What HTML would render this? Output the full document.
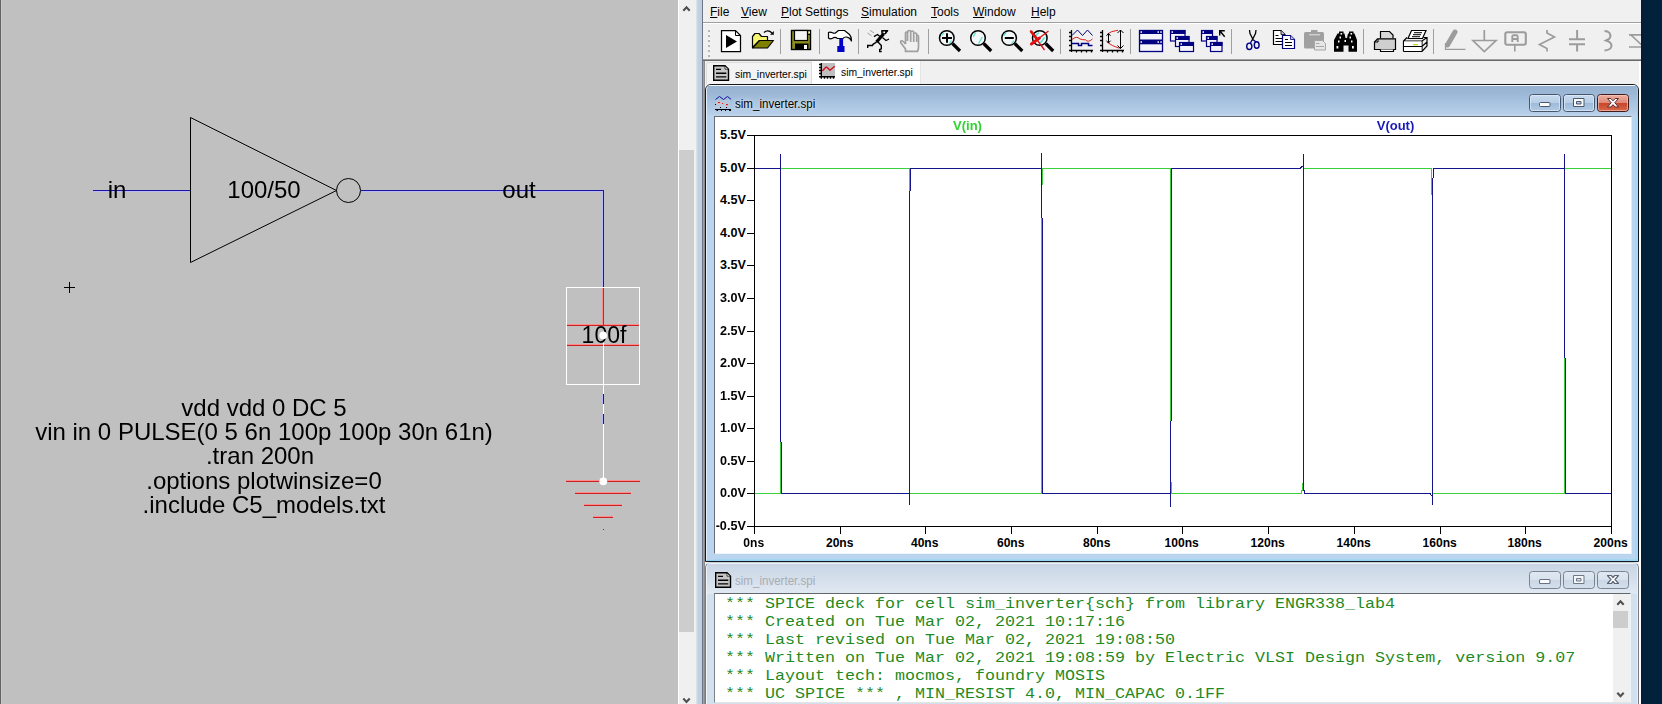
<!DOCTYPE html>
<html>
<head>
<meta charset="utf-8">
<title>sim_inverter</title>
<style>
html,body{margin:0;padding:0;}
body{width:1662px;height:704px;overflow:hidden;position:relative;background:#c0c0c0;font-family:"Liberation Sans",sans-serif;}
.abs{position:absolute;}
#left{left:0;top:0;width:678px;height:704px;background:#c0c0c0;}
#sch{left:0;top:0;}
.st{will-change:transform;position:absolute;font-size:24px;line-height:24px;color:#000;white-space:nowrap;transform:translateX(-50%);}
#vsb{left:678px;top:0;width:18px;height:704px;background:#f0f0f0;border-left:1px solid #fff;box-sizing:border-box;}
#vsbthumb{left:679px;top:150px;width:15px;height:482px;background:#cdcdcd;}
#frameL{left:696px;top:0;width:6px;height:704px;background:linear-gradient(90deg,#dfe7f0 0,#c4d2e0 30%,#c0cedc 100%);}
#frameLd{left:702px;top:0;width:1px;height:704px;background:#6d7787;}
#app{left:703px;top:0;width:938px;height:704px;background:#f0f0f0;}
#navy{left:1641px;top:0;width:21px;height:704px;background:linear-gradient(90deg,#021b2c 0,#02203a 2px,#02223c 100%);}
#menubar{left:703px;top:0;width:938px;height:22px;background:#f0f0f0;}
.mi{position:absolute;top:5px;font-size:12px;line-height:15px;color:#000;white-space:nowrap;}
.mi u{text-decoration:underline;}
#menuline{left:703px;top:22px;width:938px;height:1px;background:#a0a0a0;}
#menuline2{left:703px;top:23px;width:938px;height:1px;background:#ffffff;}
#tbline1{left:703px;top:59px;width:938px;height:1px;background:#a0a0a0;}
#tbline2{left:703px;top:60px;width:938px;height:1px;background:#696969;}

.win{position:absolute;box-sizing:border-box;border:1px solid #15181d;border-radius:6px 6px 0 0;overflow:hidden;}
.win .hl{position:absolute;left:0;top:0;right:0;bottom:0;box-sizing:border-box;border-radius:5px 5px 0 0;}
.ttxt{position:absolute;font-size:12px;line-height:15px;white-space:nowrap;transform-origin:0 0;transform:scaleX(0.963);}
.cbtn{position:absolute;box-sizing:border-box;width:32px;height:18px;border-radius:3px;}
.tabtxt{position:absolute;font-size:11px;line-height:14px;white-space:nowrap;color:#000;transform-origin:0 0;transform:scaleX(0.94);}
.mono{position:absolute;font-family:"Liberation Mono",monospace;font-size:14px;line-height:18px;color:#1f8a1f;white-space:pre;transform-origin:0 0;transform:scaleX(1.1905);}
</style>
</head>
<body>
<div id="left" class="abs"></div>
<svg id="sch" class="abs" width="678" height="704" viewBox="0 0 678 704">
  <rect x="0" y="0" width="1" height="704" fill="#646464"/><rect x="1" y="0" width="1" height="704" fill="#c8c8c8"/>
  <!-- wires -->
  <g stroke="#b8b8ff" stroke-width="1" fill="none" shape-rendering="crispEdges">
    <line x1="93" y1="191.5" x2="190" y2="191.5"/>
    <line x1="361" y1="191.5" x2="603" y2="191.5"/>
    <line x1="602.5" y1="191" x2="602.5" y2="287"/>
  </g>
  <g stroke="#1e1496" stroke-width="1" fill="none" shape-rendering="crispEdges">
    <line x1="93" y1="190.5" x2="190" y2="190.5"/>
    <line x1="361" y1="190.5" x2="604" y2="190.5"/>
    <line x1="603.5" y1="190" x2="603.5" y2="287"/>
  </g>
  <!-- inverter -->
  <g stroke="#000" stroke-width="1" fill="none">
    <polygon points="190.5,117.5 190.5,262.5 336.5,190.5"/>
    <circle cx="348.5" cy="190.5" r="12"/>
  </g>
  <!-- capacitor -->
  <g shape-rendering="crispEdges" fill="none">
    <rect x="566.5" y="287.5" width="73" height="97" stroke="#fff"/>
    <g stroke="#ff8c8c">
    <line x1="602.5" y1="288" x2="602.5" y2="325"/>
    <line x1="567" y1="324.5" x2="639" y2="324.5"/>
    <line x1="567" y1="344.5" x2="639" y2="344.5"/>
    </g>
    <g stroke="#cc2222">
    <line x1="603.5" y1="288" x2="603.5" y2="325"/>
    <line x1="567" y1="325.5" x2="639" y2="325.5"/>
    <line x1="567" y1="345.5" x2="639" y2="345.5"/>
    </g>
    <line x1="603.5" y1="336" x2="603.5" y2="481" stroke="#fff"/>
    <line x1="602.5" y1="394" x2="602.5" y2="404" stroke="#b8b8ff"/><line x1="603.5" y1="394" x2="603.5" y2="404" stroke="#1e1496"/>
    <line x1="602.5" y1="414" x2="602.5" y2="424" stroke="#b8b8ff"/><line x1="603.5" y1="414" x2="603.5" y2="424" stroke="#1e1496"/>
    <!-- ground -->
    <g stroke="#ff8c8c">
      <line x1="566" y1="480.5" x2="640" y2="480.5"/>
      <line x1="575" y1="492.5" x2="631" y2="492.5"/>
      <line x1="584" y1="504.5" x2="622" y2="504.5"/>
      <line x1="593" y1="516.5" x2="613" y2="516.5"/>
    </g>
    <g stroke="#cc2222">
      <line x1="566" y1="481.5" x2="640" y2="481.5"/>
      <line x1="575" y1="493.5" x2="631" y2="493.5"/>
      <line x1="584" y1="505.5" x2="622" y2="505.5"/>
      <line x1="593" y1="517.5" x2="613" y2="517.5"/>
      <line x1="603" y1="529.5" x2="604" y2="529.5" stroke="#803030"/>
    </g>
  </g>
  <circle cx="603.3" cy="481.3" r="3.9" fill="#fff"/>
  <!-- cursor + -->
  <g stroke="#000" shape-rendering="crispEdges">
    <line x1="64" y1="287.5" x2="75" y2="287.5"/>
    <line x1="69.5" y1="282" x2="69.5" y2="293"/>
  </g>
</svg>
<div class="st" style="left:117px;top:178px;">in</div>
<div class="st" style="left:264px;top:178px;">100/50</div>
<div class="st" style="left:519px;top:178px;">out</div>
<div class="st" style="left:604px;top:323px;font-size:23px;">100f</div>
<svg class="abs" style="left:598px;top:330px" width="12" height="12"><circle cx="5.2" cy="5.4" r="3.8" fill="#fff"/></svg>
<div class="st" style="left:264px;top:396px;">vdd vdd 0 DC 5</div>
<div class="st" style="left:264px;top:420px;">vin in 0 PULSE(0 5 6n 100p 100p 30n 61n)</div>
<div class="st" style="left:260px;top:444px;">.tran 200n</div>
<div class="st" style="left:264px;top:469px;">.options plotwinsize=0</div>
<div class="st" style="left:264px;top:493px;">.include C5_models.txt</div>

<div id="vsb" class="abs"></div>
<div id="vsbthumb" class="abs"></div>
<svg class="abs" style="left:679px;top:0" width="17" height="704">
  <path d="M4.3 10.8 L7.5 7.3 L10.7 10.8" stroke="#505050" stroke-width="2.1" fill="none"/>
  <path d="M4.3 698.5 L7.5 702 L10.7 698.5" stroke="#505050" stroke-width="2.1" fill="none"/>
</svg>
<div id="frameL" class="abs"></div>
<div id="frameLd" class="abs"></div>
<div id="app" class="abs"></div>
<div id="navy" class="abs"></div>

<!-- MENU -->
<div id="menubar" class="abs"></div>
<div class="mi" style="left:710px"><u>F</u>ile</div>
<div class="mi" style="left:741px"><u>V</u>iew</div>
<div class="mi" style="left:781px"><u>P</u>lot Settings</div>
<div class="mi" style="left:861px"><u>S</u>imulation</div>
<div class="mi" style="left:931px"><u>T</u>ools</div>
<div class="mi" style="left:973px"><u>W</u>indow</div>
<div class="mi" style="left:1031px"><u>H</u>elp</div>
<div id="menuline" class="abs"></div>
<div id="menuline2" class="abs"></div>
<div id="tbline1" class="abs"></div>
<div id="tbline2" class="abs"></div>
<svg class="abs" style="left:703px;top:23px" width="938" height="36" viewBox="703 23 938 36">
<!-- gripper -->
<g fill="#b4b4b4">
<rect x="708" y="30" width="2" height="2"/><rect x="708" y="35" width="2" height="2"/><rect x="708" y="40" width="2" height="2"/><rect x="708" y="45" width="2" height="2"/><rect x="708" y="50" width="2" height="2"/><rect x="708" y="55" width="2" height="2"/>
</g>
<g fill="#ffffff">
<rect x="709" y="29" width="1" height="1"/><rect x="709" y="34" width="1" height="1"/><rect x="709" y="39" width="1" height="1"/><rect x="709" y="44" width="1" height="1"/><rect x="709" y="49" width="1" height="1"/><rect x="709" y="54" width="1" height="1"/>
</g>
<!-- separators -->
<g fill="#a0a0a0">
<rect x="780" y="29" width="1" height="25"/><rect x="819" y="29" width="1" height="25"/><rect x="858" y="29" width="1" height="25"/><rect x="928" y="29" width="1" height="25"/><rect x="1060" y="29" width="1" height="25"/><rect x="1130" y="29" width="1" height="25"/><rect x="1231" y="29" width="1" height="25"/><rect x="1363" y="29" width="1" height="25"/><rect x="1433" y="29" width="1" height="25"/>
</g>
<!-- 1 run -->
<path d="M721.5 30.5 H735.5 L740.5 35.5 V51.5 H721.5 Z" fill="#fff" stroke="#000" stroke-width="1.25"/>
<path d="M735.5 30.5 V35.5 H740.5" fill="none" stroke="#000" stroke-width="1"/>
<path d="M726 35 L737 41.5 L726 48 Z" fill="#000"/>
<!-- 2 open -->
<path d="M752.5 47.5 V36.5 L755 33.5 H759 L761.5 36.5 H767.5 V40.5 H759.5 L752.5 47.5 Z" fill="#f4f46e" stroke="#000" stroke-width="1.2" stroke-linejoin="round"/>
<path d="M752.5 48 L759.5 40.5 H773.5 L767.5 48 Z" fill="#808000" stroke="#000" stroke-width="1.2" stroke-linejoin="round"/>
<path d="M764 32.5 Q768 29 772 33" fill="none" stroke="#000" stroke-width="1.4"/>
<path d="M770 34.8 H773.8 V31 Z" fill="#000"/>
<!-- 3 save -->
<rect x="791.5" y="30.5" width="19" height="19" fill="#8c8c1e" stroke="#000" stroke-width="1.4"/>
<rect x="794.5" y="30.5" width="13" height="10" fill="#f4f4f4" stroke="#000" stroke-width="1.2"/>
<rect x="795" y="43.5" width="13.5" height="6.5" fill="#000"/>
<rect x="804" y="45" width="3" height="4" fill="#fff"/>
<rect x="808.5" y="31.5" width="1.5" height="1.8" fill="#fff"/>
<rect x="808" y="34" width="3" height="1" fill="#000"/>
<!-- 4 hammer -->
<path d="M828.5 32.5 Q830 31.5 832.5 32.8 Q834.5 33.8 836 32.5 L838.5 30.5 H844.5 L849.5 34.5 Q851.5 36.5 851.5 41 Q850 37.5 846.5 37 Q844 36.8 843 38.5 H837.5 Q835 36.5 832.5 38.3 Q830 39.5 828.5 38 Z" fill="#fff" stroke="#000" stroke-width="1.2" stroke-linejoin="round"/>
<rect x="839.3" y="38.5" width="3.8" height="8" fill="#0000c8"/>
<rect x="837.3" y="46" width="7.2" height="6" fill="#0000c8"/>
<!-- 5 runner -->
<g stroke="#000" fill="none" stroke-linecap="square">
<path d="M882 30.5 H888 L885.5 34 H882.5 Z" fill="#000" stroke-width="1"/>
<path d="M883.5 34 L876.5 42" stroke-width="3.4" stroke-linecap="butt"/>
<path d="M880 36.5 L877.5 34.5 L874.5 36.3" stroke-width="1.3"/>
<path d="M883 38 L886 40.5 L888.5 39.3" stroke-width="1.3"/>
<path d="M876 42.5 L873 44.3 L872.5 45.5 H867.7 V47.3" stroke-width="1.4"/>
<path d="M878.5 42.5 L881.3 45.5 V48.8 L879.7 49.5 V51.5 H881" stroke-width="1.4"/>
</g>
<rect x="883.3" y="31.5" width="1.8" height="1.6" fill="#fff"/>
<path d="M870 30.3 L874 33 M867.5 33 L871.5 35.7" stroke="#a0a0a0" stroke-width="1" fill="none"/>
<!-- 6 hand gray -->
<g stroke="#a0a0a0" fill="none" stroke-width="1.7">
<path d="M905.5 44 V33 Q905.5 32 906.5 32 Q907.5 32 907.5 33 V41"/>
<path d="M907.7 33 V31.5 Q907.7 30.5 909.2 30.5 Q910.7 30.5 910.7 31.5 V42"/>
<path d="M910.9 32 Q910.9 31 912.3 31 Q913.7 31 913.7 32 V42"/>
<path d="M913.9 34 Q913.9 33 915.3 33 Q916.7 33 916.7 34 V42"/>
<path d="M916.7 35 Q918.5 35 918.5 37 V48 L917.5 51.3 H905.5 V49 L901 43 Q900 41.3 901.5 40.8 Q903 40.5 905.5 44"/>
</g>
<!-- 7-10 zoom -->
<g id="mag">
<path d="M952.5 43.5 L960 51" stroke="#000" stroke-width="3.2" stroke-linecap="butt"/>
<circle cx="946.8" cy="38" r="7.3" fill="#f2f8f8" stroke="#000" stroke-width="1.5"/>
<path d="M941.5 35.5 L944 32.5 M949 44 L951.5 40.5" stroke="#5fe0d0" stroke-width="1.2" fill="none"/>
</g>
<path d="M942 38 H952 M947 33.3 V42.7" stroke="#000" stroke-width="2" fill="none"/>
<g transform="translate(31.2 0)">
<path d="M952.5 43.5 L960 51" stroke="#000" stroke-width="3.2"/>
<circle cx="946.8" cy="38" r="7.3" fill="#f2f8f8" stroke="#000" stroke-width="1.5"/>
<path d="M942 37 L944.5 32.5 M947.5 43.5 L951 37" stroke="#5fe0d0" stroke-width="1.3" fill="none"/>
</g>
<g transform="translate(62.3 0)">
<path d="M952.5 43.5 L960 51" stroke="#000" stroke-width="3.2"/>
<circle cx="946.8" cy="38" r="7.3" fill="#f2f8f8" stroke="#000" stroke-width="1.5"/>
<path d="M941.5 35.5 L944 32.5 M949 44 L951.5 40.5" stroke="#5fe0d0" stroke-width="1.2" fill="none"/>
<path d="M942.5 38 H951.5" stroke="#000" stroke-width="2" fill="none"/>
</g>
<g transform="translate(93.2 0)">
<path d="M952.5 43.5 L960 51" stroke="#000" stroke-width="3.2"/>
<circle cx="946.6" cy="38" r="7.3" fill="#f2f8f8" stroke="#000" stroke-width="1.5"/>
<path d="M942.5 36 L945.5 32.5 M947 43 L951.5 37.5" stroke="#5fe0d0" stroke-width="1.6" fill="none"/>
<path d="M937 30.5 L951.3 50 M955.3 31 L937 45" stroke="#e01010" stroke-width="1.3" fill="none"/>
<path d="M937.5 31 L945 40.5 M937.5 44.5 L947 37.5" stroke="#e01010" stroke-width="2.8" fill="none"/>
</g>
<!-- 11 plot -->
<g fill="none">
<path d="M1071.5 30 V52 M1069 50.5 H1093 M1069 32.5 H1071 M1069 36.5 H1071 M1069 40.5 H1071 M1069 45.5 H1071 M1076.5 51 V52.5 M1081.5 51 V52.5 M1086.5 51 V52.5 M1091.5 51 V52.5" stroke="#000" stroke-width="1.3"/>
<path d="M1072 35.5 L1077.5 30 L1082.5 35.5 L1087.5 30 L1092.5 35.5" stroke="#000080" stroke-width="1"/>
<path d="M1072 39.5 Q1076.5 35.5 1080 39 Q1083 40 1085.5 39.8 Q1088 43 1092.5 39" stroke="#d82020" stroke-width="1"/>
<path d="M1072 43.5 H1078.5 V45.5 H1081.5 V43.5 H1088.5 V45.5 H1092.5" stroke="#000080" stroke-width="1.5"/>
</g>
<!-- 12 plot2 -->
<g fill="none">
<path d="M1102.5 30 V52 M1100 50.5 H1124 M1100 32.5 H1102 M1100 36.5 H1102 M1100 40.5 H1102 M1100 45.5 H1102 M1107.5 51 V52.5 M1112.5 51 V52.5 M1117.5 51 V52.5 M1122.5 51 V52.5" stroke="#000" stroke-width="1.3"/>
<path d="M1107.5 34 Q1111 31 1118 30.3 M1107.5 42.5 Q1112 46 1119.5 48.3" stroke="#d82020" stroke-width="1"/>
<path d="M1108.5 33.5 V43 M1106.5 35.8 L1108.5 33.5 L1110.5 35.8 M1106.5 40.7 L1108.5 43 L1110.5 40.7" stroke="#000" stroke-width="1"/>
<path d="M1120.5 30 V48.5 M1117.5 33 L1120.5 30 L1123.5 33 M1117.5 45.5 L1120.5 48.5 L1123.5 45.5" stroke="#000" stroke-width="1"/>
</g>
<!-- 13 tile -->
<rect x="1139.5" y="30.5" width="23" height="21" fill="#f4f4fa" stroke="#000080" stroke-width="1.3"/>
<rect x="1139" y="30" width="24" height="4" fill="#000080"/>
<rect x="1139" y="39.5" width="24" height="4.8" fill="#000080"/>
<g fill="#fff"><rect x="1140.5" y="31.3" width="1.5" height="1.5"/><rect x="1157.5" y="31.3" width="1.5" height="1.5"/><rect x="1160.3" y="31.3" width="1.5" height="1.5"/><rect x="1140.5" y="41.3" width="1.5" height="1.5"/><rect x="1157.5" y="41.3" width="1.5" height="1.5"/><rect x="1160.3" y="41.3" width="1.5" height="1.5"/></g>
<!-- 14 cascade -->
<g id="casc">
<rect x="1170.5" y="30.5" width="14.5" height="10.5" fill="#f4f4fa" stroke="#000080" stroke-width="1.2"/><rect x="1170" y="30" width="15.5" height="4" fill="#000080"/><rect x="1171.5" y="31.3" width="1.5" height="1.5" fill="#fff"/>
<rect x="1175.5" y="36.5" width="13.5" height="10" fill="#f4f4fa" stroke="#000080" stroke-width="1.2"/><rect x="1175" y="36" width="14.5" height="4" fill="#000080"/><rect x="1176.5" y="37.3" width="1.5" height="1.5" fill="#fff"/>
<rect x="1179.5" y="42.5" width="14" height="9" fill="#f4f4fa" stroke="#000080" stroke-width="1.2"/><rect x="1179" y="42" width="15" height="4" fill="#000080"/><rect x="1180.5" y="43.3" width="1.5" height="1.5" fill="#fff"/>
</g>
<!-- 15 cascade+arrow -->
<g>
<rect x="1201.5" y="30.5" width="11" height="10.5" fill="#f4f4fa" stroke="#000080" stroke-width="1.2"/><rect x="1201" y="30" width="12" height="4" fill="#000080"/><rect x="1202.5" y="31.3" width="1.5" height="1.5" fill="#fff"/>
<rect x="1206.5" y="36.5" width="10.5" height="10" fill="#f4f4fa" stroke="#000080" stroke-width="1.2"/><rect x="1206" y="36" width="11.5" height="4" fill="#000080"/><rect x="1207.5" y="37.3" width="1.5" height="1.5" fill="#fff"/>
<rect x="1210.5" y="42.5" width="11.5" height="9" fill="#f4f4fa" stroke="#000080" stroke-width="1.2"/><rect x="1210" y="42" width="12.5" height="4" fill="#000080"/><rect x="1211.5" y="43.3" width="1.5" height="1.5" fill="#fff"/>
<path d="M1224.8 30.7 H1219.7 V35.5 M1220 31 L1224.7 36.8" stroke="#000" stroke-width="1.4" fill="none"/>
</g>
<!-- 16 cut -->
<path d="M1249.5 30 L1250 33.5 L1253.5 40.5 M1256 30 L1255.5 33.5 L1252 40.5" stroke="#000" stroke-width="1.3" fill="none"/>
<path d="M1253.5 40 L1256 42 M1252 40 L1250.5 43" stroke="#000080" stroke-width="1.3" fill="none"/>
<ellipse cx="1249.3" cy="46.3" rx="2.6" ry="3.2" fill="none" stroke="#000080" stroke-width="1.4"/>
<ellipse cx="1256.7" cy="45" rx="2.4" ry="3.2" fill="none" stroke="#000080" stroke-width="1.4"/>
<!-- 17 copy -->
<path d="M1273.5 30.5 H1281 L1285 34.5 V44.5 H1273.5 Z" fill="#fff" stroke="#000" stroke-width="1.2"/>
<path d="M1281 30.5 V34.5 H1285" fill="#c0c0e0" stroke="#000" stroke-width="0.8"/>
<path d="M1275.5 35.5 H1278.5 M1275.5 38.5 H1282 M1275.5 41.5 H1282" stroke="#000" stroke-width="1"/>
<path d="M1282.5 35.5 H1290.5 L1294.5 39.5 V48.5 H1282.5 Z" fill="#fff" stroke="#000080" stroke-width="1.2"/>
<path d="M1290.5 35.5 V39.5 H1294.5" fill="#c0c0e0" stroke="#000080" stroke-width="0.8"/>
<path d="M1285 39.5 H1288 M1285 42.5 H1292 M1285 45.5 H1292" stroke="#000" stroke-width="1"/>
<!-- 18 paste gray -->
<rect x="1304" y="32" width="20" height="16.5" rx="1.5" fill="#a0a0a0"/>
<rect x="1311" y="30" width="6.5" height="3" fill="#a0a0a0"/>
<rect x="1309" y="34.3" width="11" height="1" fill="#e4e4e4"/>
<path d="M1314.5 40.5 H1322.5 L1325.5 43.5 V50 H1314.5 Z" fill="#e6e6e6" stroke="#a6a6a6" stroke-width="1"/>
<path d="M1316 43.5 H1319.5 M1316 46.5 H1324" stroke="#a8a8a8" stroke-width="1"/>
<!-- 19 binoculars -->
<path d="M1339 31.5 H1343.5 V33.5 H1344.5 L1345.5 38 H1347 L1348 33.5 H1349 V31.5 H1353.500 V33.500 H1354.500 L1357 40 V51.800 H1348.500 V45.500 H1343.500 V51.800 H1334 V40 L1337.500 33.500 H1339 Z" fill="#000"/>
<g fill="#fff"><rect x="1340.5" y="33" width="1.6" height="1.6"/><rect x="1350.5" y="33" width="1.6" height="1.6"/><rect x="1339.5" y="36.500" width="1.5" height="2"/><rect x="1349.500" y="36.500" width="1.5" height="2"/><rect x="1338" y="40.500" width="1.5" height="2"/><rect x="1344.500" y="40" width="1.5" height="2"/><rect x="1351" y="40.500" width="1.5" height="2"/><rect x="1336.500" y="46" width="1.800" height="2.500"/><rect x="1352" y="46" width="1.800" height="2.500"/></g>
<!-- 20 print setup -->
<path d="M1380.500 38.500 V31.500 H1389.500 L1393 35 V38.500" fill="#d8d8d8" stroke="#000" stroke-width="1.2"/>
<path d="M1374.500 49.500 V42 L1377.500 38.800 H1395.500 V49.500 Z" fill="#cfcfcf" stroke="#000" stroke-width="1.2"/>
<path d="M1374.500 42 H1378 V39" fill="none" stroke="#000" stroke-width="1"/>
<path d="M1380.500 49.500 V51.500 H1393.500 V49.500" fill="#fff" stroke="#000" stroke-width="1.2"/>
<!-- 21 print -->
<path d="M1411.500 30.500 H1426 L1422.500 38.500 H1408 Z" fill="#fff" stroke="#000" stroke-width="1.2"/>
<path d="M1414 32.700 H1422 M1413 34.700 H1421 M1412 36.700 H1420" stroke="#000" stroke-width="1"/>
<path d="M1403.500 51.500 V41 L1407 37.500 M1423.500 37.500 H1427 V46 L1422 51.500 H1403.500 M1403.500 41 H1422 L1427 37.500 M1422 41 V51.500 M1403.500 46.500 H1422 L1427 42" fill="none" stroke="#000" stroke-width="1.2"/>
<rect x="1404" y="41.500" width="17.500" height="4.500" fill="#fff"/><rect x="1404" y="47" width="17.500" height="4" fill="#fff"/>
<rect x="1413" y="44" width="5" height="1.300" fill="#c8d820"/>
<!-- gray disabled -->
<g stroke="#9c9c9c" fill="none">
<path d="M1455 32 L1447.500 45" stroke-width="5" stroke-linecap="round"/>
<path d="M1445.500 43 V49.300 H1465.500" stroke-width="1.200"/>
<path d="M1445.300 48.500 L1448.500 43 L1445.300 43 Z" fill="#9c9c9c" stroke="none"/>
<path d="M1484.300 30 V40.500 M1473 40.500 H1496 L1484.300 51.500 Z" stroke-width="1.700"/>
<rect x="1505.300" y="32.200" width="20.500" height="12.500" rx="2" stroke-width="2.100"/>
<path d="M1514.800 45 V51.600" stroke-width="1.600"/>
<path d="M1512.300 42 V36.500 Q1512.300 35.300 1513.500 35.300 H1516.500 Q1517.700 35.300 1517.700 36.500 V42 M1512.300 39 H1517.700" stroke-width="1.900"/>
<path d="M1547 30 V33 L1554.500 37 L1539.500 44.500 L1547 48.500 V51.600" stroke-width="1.700"/>
<path d="M1577.100 30 V38.500 M1569 39.300 H1585 M1569 44.300 H1585 M1577.100 45 V51.600" stroke-width="2"/>
<path d="M1604.500 31 Q1608 31 1609.500 33 Q1611.500 36.500 1609 39 L1606 40.500 Q1611.500 42 1611.500 46 Q1611 50 1604.500 50.500" stroke-width="2"/>
<path d="M1629 34.800 H1641 M1631 35 L1641 44.500 M1629 47 H1641" stroke-width="1.700"/>
</g>
</svg>


<div class="abs" style="left:703px;top:61px;width:938px;height:23px;background:#f0f0f0;"></div>
<div class="abs" style="left:703px;top:61px;width:1px;height:643px;background:#a0a0a0;"></div><div class="abs" style="left:704px;top:61px;width:1px;height:643px;background:#8c8c8c;"></div>

<div class="abs" style="left:706px;top:62px;width:106px;height:22px;background:#f3f3f3;box-sizing:border-box;border:1px solid #dcdcdc;border-bottom:none;border-radius:3px 0 0 0;"></div>
<div class="abs" style="left:812px;top:61px;width:109px;height:23px;background:#ffffff;box-sizing:border-box;border-right:1px solid #e4e4e4;"></div>
<div class="tabtxt" style="left:735px;top:67px;">sim_inverter.spi</div>
<div class="tabtxt" style="left:841px;top:65px;">sim_inverter.spi</div>
<!--TABICONS_PLACED-->

<div class="win" id="win1" style="left:705px;top:84px;width:934px;height:478px;background:#bcd5ef;">
  <div class="abs" style="left:0;top:0;width:932px;height:31px;background:linear-gradient(180deg,#f4f9fd 0,#f4f9fd 1px,#97b1d1 1px,#9db8d7 9px,#a9c4e0 18px,#b5cee9 28px,#bfd3ea 30px);"></div>
  <div class="hl" style="border:1px solid rgba(255,255,255,0.0);border-left-color:#e3eefa;border-right-color:#8bd2f5;border-bottom-color:#8bd2f5;"></div>
</div>
<div class="abs" style="left:714px;top:116px;width:918px;height:438px;box-sizing:border-box;border:1px solid #676d75;border-right-color:#dfeaf6;border-bottom-color:#f2f6fa;background:#fff;"></div>
<div class="ttxt" style="left:735px;top:97px;color:#000;text-shadow:0 0 5px rgba(255,255,255,0.7),0 0 2px rgba(255,255,255,0.4);">sim_inverter.spi</div>
<svg class="abs" style="left:715px;top:117px" width="916" height="436" viewBox="715 117 916 436">
<rect x="715" y="117" width="916" height="436" fill="#fff"/>
<g stroke="#000" stroke-width="1" fill="none" shape-rendering="crispEdges">
<rect x="754.5" y="135.5" width="857" height="391"/>
<line x1="747" y1="135.5" x2="754" y2="135.5"/>
<line x1="747" y1="168.5" x2="754" y2="168.5"/>
<line x1="747" y1="200.5" x2="754" y2="200.5"/>
<line x1="747" y1="233.5" x2="754" y2="233.5"/>
<line x1="747" y1="265.5" x2="754" y2="265.5"/>
<line x1="747" y1="298.5" x2="754" y2="298.5"/>
<line x1="747" y1="331.5" x2="754" y2="331.5"/>
<line x1="747" y1="363.5" x2="754" y2="363.5"/>
<line x1="747" y1="396.5" x2="754" y2="396.5"/>
<line x1="747" y1="428.5" x2="754" y2="428.5"/>
<line x1="747" y1="461.5" x2="754" y2="461.5"/>
<line x1="747" y1="493.5" x2="754" y2="493.5"/>
<line x1="747" y1="526.5" x2="754" y2="526.5"/>
<line x1="754.5" y1="527" x2="754.5" y2="534"/>
<line x1="840.5" y1="527" x2="840.5" y2="534"/>
<line x1="925.5" y1="527" x2="925.5" y2="534"/>
<line x1="1011.5" y1="527" x2="1011.5" y2="534"/>
<line x1="1097.5" y1="527" x2="1097.5" y2="534"/>
<line x1="1182.5" y1="527" x2="1182.5" y2="534"/>
<line x1="1268.5" y1="527" x2="1268.5" y2="534"/>
<line x1="1354.5" y1="527" x2="1354.5" y2="534"/>
<line x1="1440.5" y1="527" x2="1440.5" y2="534"/>
<line x1="1525.5" y1="527" x2="1525.5" y2="534"/>
<line x1="1611.5" y1="527" x2="1611.5" y2="534"/>
</g>
<g font-family="Liberation Sans, sans-serif" font-weight="bold" font-size="13px" fill="#000">
<text transform="translate(745.8 139.4) scale(0.97 1)" text-anchor="end">5.5V</text>
<text transform="translate(745.8 172.4) scale(0.97 1)" text-anchor="end">5.0V</text>
<text transform="translate(745.8 204.4) scale(0.97 1)" text-anchor="end">4.5V</text>
<text transform="translate(745.8 237.4) scale(0.97 1)" text-anchor="end">4.0V</text>
<text transform="translate(745.8 269.4) scale(0.97 1)" text-anchor="end">3.5V</text>
<text transform="translate(745.8 302.4) scale(0.97 1)" text-anchor="end">3.0V</text>
<text transform="translate(745.8 335.4) scale(0.97 1)" text-anchor="end">2.5V</text>
<text transform="translate(745.8 367.4) scale(0.97 1)" text-anchor="end">2.0V</text>
<text transform="translate(745.8 400.4) scale(0.97 1)" text-anchor="end">1.5V</text>
<text transform="translate(745.8 432.4) scale(0.97 1)" text-anchor="end">1.0V</text>
<text transform="translate(745.8 465.4) scale(0.97 1)" text-anchor="end">0.5V</text>
<text transform="translate(745.8 497.4) scale(0.97 1)" text-anchor="end">0.0V</text>
<text transform="translate(745.8 530.4) scale(0.97 1)" text-anchor="end">-0.5V</text>
<text transform="translate(753.7 547) scale(0.93 1)" text-anchor="middle">0ns</text>
<text transform="translate(839.7 547) scale(0.93 1)" text-anchor="middle">20ns</text>
<text transform="translate(924.7 547) scale(0.93 1)" text-anchor="middle">40ns</text>
<text transform="translate(1010.7 547) scale(0.93 1)" text-anchor="middle">60ns</text>
<text transform="translate(1096.7 547) scale(0.93 1)" text-anchor="middle">80ns</text>
<text transform="translate(1181.7 547) scale(0.93 1)" text-anchor="middle">100ns</text>
<text transform="translate(1267.7 547) scale(0.93 1)" text-anchor="middle">120ns</text>
<text transform="translate(1353.7 547) scale(0.93 1)" text-anchor="middle">140ns</text>
<text transform="translate(1439.7 547) scale(0.93 1)" text-anchor="middle">160ns</text>
<text transform="translate(1524.7 547) scale(0.93 1)" text-anchor="middle">180ns</text>
<text transform="translate(1610.7 547) scale(0.93 1)" text-anchor="middle">200ns</text>
</g>
<text x="967.5" y="130" text-anchor="middle" font-family="Liberation Sans, sans-serif" font-weight="bold" font-size="13px" fill="#2fd32f">V(in)</text>
<text x="1395.5" y="130" text-anchor="middle" font-family="Liberation Sans, sans-serif" font-weight="bold" font-size="13px" fill="#1a1ab8">V(out)</text>
<path d="M755 493.5 H780.5 V168.5 H909.5 V493.5 H1041.5 V218 M1042.5 185 V168.5 H1170.5 V493.5 M1171.5 482 V493.5 H1301 L1302.5 489 V483 M1303.5 168.5 H1431.5 V195 M1433 493.5 H1564.5 V168.5 H1611" stroke="#3ad03a" stroke-width="1" fill="none" shape-rendering="crispEdges"/>
<path d="M755 168.5 H780.5 M780.5 154 V442 M781.5 442 V493.5 H909.5 M909.5 505 V191 M910.5 191 V168.5 H1041.5 M1041.5 153 V218 M1042.5 218 V493.5 H1170.5 M1170.5 507 V421 M1171.5 421 V168.5 H1300 L1302 166.5 L1303.5 166.5 M1303.5 154 V489 L1305 493.5 H1430 L1431.5 496 M1432.5 505 V178 M1433.5 178 V168.5 H1564.5 M1564.5 154 V358 M1565.5 358 V493.5 H1611" stroke="#14148c" stroke-width="1" fill="none" shape-rendering="crispEdges"/>
</svg>
<div class="abs" style="left:1639px;top:61px;width:2px;height:643px;background:#fff;"></div>
<div class="abs" style="left:1635px;top:117px;width:3px;height:444px;background:linear-gradient(90deg,#a9d6f2,#9ddcf8);"></div>
<div class="abs" style="left:715px;top:559px;width:923px;height:2px;background:linear-gradient(180deg,#a9d6f2,#8fd4f6);"></div>
<svg class="abs" style="left:1525px;top:90px" width="110" height="26" viewBox="1525 90 110 26">
<defs>
<linearGradient id="gb" x1="0" y1="0" x2="0" y2="1"><stop offset="0" stop-color="#c9dbee"/><stop offset="0.48" stop-color="#b8cee6"/><stop offset="0.5" stop-color="#9dbad9"/><stop offset="1" stop-color="#b3cce6"/></linearGradient>
<linearGradient id="gr" x1="0" y1="0" x2="0" y2="1"><stop offset="0" stop-color="#eeb0a2"/><stop offset="0.48" stop-color="#dd8b78"/><stop offset="0.5" stop-color="#c9452a"/><stop offset="1" stop-color="#d9694a"/></linearGradient>
</defs>
<rect x="1529.5" y="94.5" width="31" height="17" rx="3" fill="url(#gb)" stroke="#46566e" stroke-width="1"/>
<rect x="1530.5" y="95.5" width="29" height="15" rx="2" fill="none" stroke="#dfeaf6" stroke-opacity="0.75" stroke-width="1"/>
<rect x="1563.5" y="94.5" width="31" height="17" rx="3" fill="url(#gb)" stroke="#46566e" stroke-width="1"/>
<rect x="1564.5" y="95.5" width="29" height="15" rx="2" fill="none" stroke="#dfeaf6" stroke-opacity="0.75" stroke-width="1"/>
<rect x="1597.5" y="94.5" width="31" height="17" rx="3" fill="url(#gr)" stroke="#431a1c" stroke-width="1"/>
<rect x="1598.5" y="95.5" width="29" height="15" rx="2" fill="none" stroke="#f6d0c6" stroke-opacity="0.6" stroke-width="1"/>
<rect x="1539.500" y="102.500" width="10.500" height="4" rx="1" fill="#fbfbfb" stroke="#4a586e" stroke-width="1"/>
<path d="M1573.500 98.500 H1584 V106.500 H1573.500 Z M1576.500 101.500 V104 H1581 V101.500 Z" fill="#fbfbfb" fill-rule="evenodd" stroke="#4a586e" stroke-width="1" stroke-linejoin="round"/>
<path d="M1607.500 98.500 H1610.800 L1613 100.800 L1615.200 98.500 H1618.500 L1614.800 102.700 L1618.500 107 H1615.200 L1613 104.700 L1610.800 107 H1607.500 L1611.200 102.700 Z" fill="#fbfbfb" stroke="#5a2a2a" stroke-width="1" stroke-linejoin="round"/>
</svg>


<div class="win" id="win2" style="left:705px;top:562px;width:934px;height:160px;background:#d3e0ee;border-color:#767d88;border-top-color:#c4ccd6;">
  <div class="abs" style="left:0;top:0;width:932px;height:31px;background:linear-gradient(180deg,#eef3f8 0,#eef3f8 1px,#c9d5e3 1px,#d3deeb 14px,#e0e8f2 30px);"></div>
  <div class="hl" style="border:1px solid rgba(255,255,255,0.0);border-left-color:#eef4fa;border-right-color:#e6eef6;"></div>
</div>
<div class="abs" style="left:714px;top:593px;width:917px;height:110px;box-sizing:border-box;border:1px solid #62676e;border-left-color:#7d838b;border-right-color:#eef3f8;border-bottom-color:#e4e4e4;background:#fff;"></div>
<div class="ttxt" style="left:735px;top:574px;color:#a8acb3;">sim_inverter.spi</div>
<div class="abs" style="left:1613px;top:594px;width:17px;height:108px;background:#f0f0f0;"></div>
<div class="abs" style="left:1613px;top:611px;width:15px;height:17px;background:#cdcdcd;"></div>
<svg class="abs" style="left:1613px;top:594px" width="17" height="110">
  <path d="M4.3 10.8 L7.5 7.3 L10.7 10.8" stroke="#505050" stroke-width="2.1" fill="none"/>
  <path d="M4.3 98.7 L7.5 102.2 L10.7 98.7" stroke="#505050" stroke-width="2.1" fill="none"/>
</svg>
<div class="mono" style="left:725px;top:595px;">*** SPICE deck for cell sim_inverter{sch} from library ENGR338_lab4
*** Created on Tue Mar 02, 2021 10:17:16
*** Last revised on Tue Mar 02, 2021 19:08:50
*** Written on Tue Mar 02, 2021 19:08:59 by Electric VLSI Design System, version 9.07
*** Layout tech: mocmos, foundry MOSIS
*** UC SPICE *** , MIN_RESIST 4.0, MIN_CAPAC 0.1FF</div>

<svg class="abs" style="left:1525px;top:567px" width="110" height="26" viewBox="1525 567 110 26">
<defs>
<linearGradient id="gi" x1="0" y1="0" x2="0" y2="1"><stop offset="0" stop-color="#dfe8f2"/><stop offset="0.48" stop-color="#d8e2ee"/><stop offset="0.5" stop-color="#cbd7e6"/><stop offset="1" stop-color="#d4dfec"/></linearGradient>
</defs>
<rect x="1529.5" y="571.5" width="31" height="17" rx="3" fill="url(#gi)" stroke="#7a8494" stroke-width="1"/>
<rect x="1563.5" y="571.5" width="31" height="17" rx="3" fill="url(#gi)" stroke="#7a8494" stroke-width="1"/>
<rect x="1597.5" y="571.5" width="31" height="17" rx="3" fill="url(#gi)" stroke="#7a8494" stroke-width="1"/>
<rect x="1539.500" y="579.500" width="10.500" height="4" rx="1" fill="#fafbfc" stroke="#687284" stroke-width="1.1"/>
<path d="M1573.500 575.500 H1584 V583.500 H1573.500 Z M1576.500 578.500 V581 H1581 V578.500 Z" fill="#f4f6f9" fill-rule="evenodd" stroke="#6d7888" stroke-width="1" stroke-linejoin="round"/>
<path d="M1607.500 575.500 H1611.300 L1613 577.500 L1614.700 575.500 H1618.500 L1615 579.500 L1618.500 583.500 H1614.700 L1613 581.500 L1611.300 583.500 H1607.500 L1611 579.500 Z" fill="#ffffff" stroke="#5c6676" stroke-width="1.2" stroke-linejoin="round"/>
</svg>

<svg class="abs" style="left:710px;top:61px" width="130" height="52" viewBox="710 61 130 52">
<!-- tab doc icon -->
<path d="M713.700 65.700 H725 L728.500 69.200 V80.200 H713.700 Z" fill="#c6c6c6" stroke="#000" stroke-width="1.400"/>
<path d="M725 66 V69.200 H728.500 L725 66 Z" fill="#f4f4f4" stroke="#000" stroke-width="0.700"/>
<path d="M716 69.400 H721 M716 73.300 H726.300 M716 76.900 H726.300" stroke="#000" stroke-width="1.400"/>
<!-- tab plot icon -->
<rect x="822" y="63" width="13" height="13.500" fill="#c0c0c0"/>
<path d="M821.300 63 V78.800 M819 76.700 H835 M819 64.500 H821 M819 67.500 H821 M819 70.500 H821 M819 73.500 H821 M824.500 77 V78.800 M827.500 77 V78.800 M830.500 77 V78.800 M833.500 77 V78.800" stroke="#000" stroke-width="1.400" fill="none"/>
<path d="M822.300 71 L825.800 67.200 H827 L830 70.200 L834.700 66.200" stroke="#d41426" stroke-width="1.500" fill="none"/>
<!-- win1 title icon -->
<rect x="716" y="100" width="14" height="8" fill="#c8ccd4" opacity="0.5"/>
<path d="M715.500 99.500 L719.500 96.500 L723.500 99.500 L727.500 96.500 L731 99.300" stroke="#1010a0" stroke-width="1" fill="none"/>
<g fill="#e02020"><rect x="718" y="102" width="2" height="1"/><rect x="722" y="103" width="1" height="1"/><rect x="726" y="104" width="2" height="1"/></g>
<g fill="#f0a8a0"><rect x="717" y="102" width="1" height="1"/><rect x="720" y="102" width="1" height="1"/><rect x="718" y="103" width="2" height="1"/><rect x="726" y="105" width="2" height="1"/></g>
<g fill="#000"><rect x="715" y="104" width="1" height="1"/><rect x="720" y="107" width="1" height="1"/><rect x="726" y="107" width="1" height="1"/>
<rect x="715" y="109" width="16" height="1"/><rect x="717" y="110" width="1" height="1"/><rect x="721" y="110" width="1" height="1"/><rect x="725" y="110" width="1" height="1"/><rect x="729" y="110" width="2" height="1"/><rect x="716" y="110" width="1" height="1" opacity="0.5"/></g>
</svg>
<svg class="abs" style="left:710px;top:568px" width="24" height="24" viewBox="710 568 24 24">
<path d="M715.700 572.700 H727 L730.500 576.200 V587.200 H715.700 Z" fill="#c6c6c6" stroke="#000" stroke-width="1.400"/>
<path d="M727 573 V576.200 H730.500 L727 573 Z" fill="#f4f4f4" stroke="#000" stroke-width="0.700"/>
<path d="M718 576.400 H723 M718 580.300 H728.300 M718 583.900 H728.300" stroke="#000" stroke-width="1.400"/>
</svg>
</body>
</html>
